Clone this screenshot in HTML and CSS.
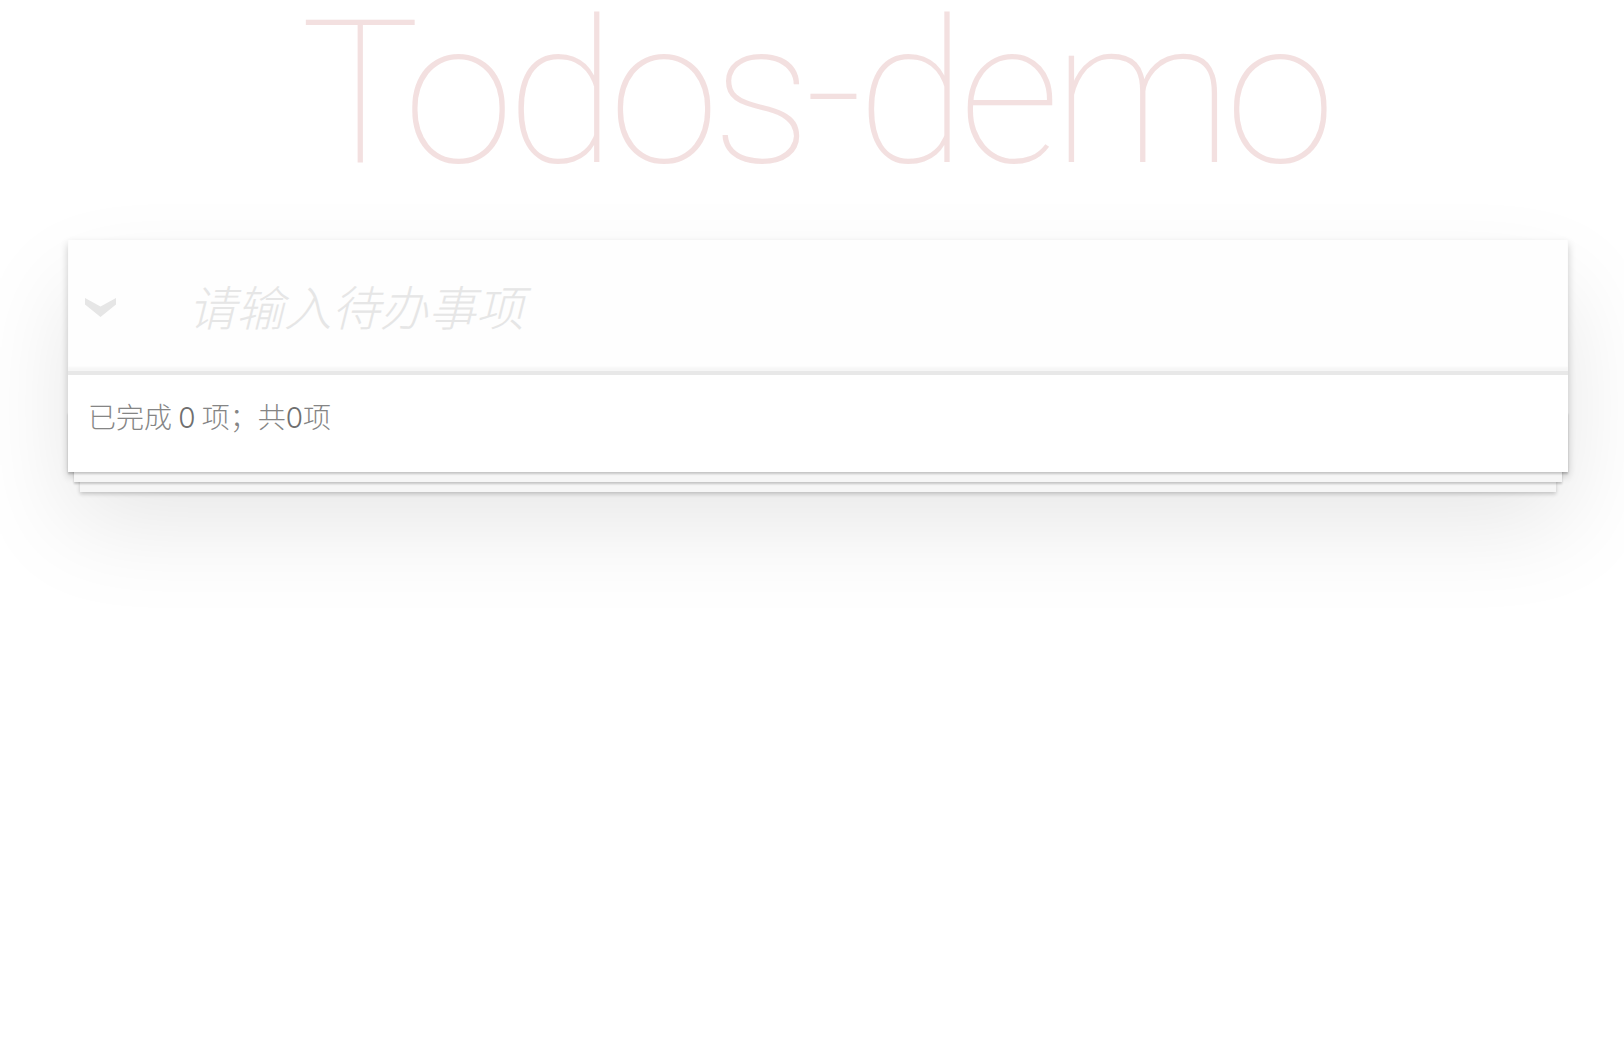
FILE: index.html
```html
<!DOCTYPE html>
<html lang="zh-CN">
<head>
<meta charset="utf-8">
<title>Todos-demo</title>
<link rel="stylesheet" href="styles.css">
</head>
<body>
<div class="page">
  <h1 class="title">Todos-demo</h1>
  <section class="todoapp">
    <header class="new-row">
      <label class="toggle-all" aria-label="全部完成">
        <svg class="chevron" width="31" height="19" viewBox="0 0 31 19"><polygon points="0,0 15.5,8.5 31,0 31,6.5 15.5,19 0,6.5" fill="#e6e6e6"/></svg>
      </label>
      <input class="new-todo" type="text" placeholder="请输入待办事项">
    </header>
    <footer class="footer">
      <span class="todo-count">已完成 <strong class="num">0</strong> 项；共<strong class="num">0</strong>项</span>
    </footer>
  </section>
</div>
</body>
</html>
```
FILE: styles.css
```css
html, body {
  margin: 0;
  padding: 0;
  background: #ffffff;
  min-height: 100%;
}

html {
  height: 100%;
}

body {
  font-family: "Inter", "Helvetica Neue", "Liberation Sans", "Noto Sans CJK SC", sans-serif;
  color: #4d4d4d;
}

.page {
  display: flex;
  flex-direction: column;
  padding-left: 68px;
  min-height: 100vh;
  box-sizing: border-box;
}

.title {
  width: 1500px;
  margin: 0;
  height: 188px;
  font-size: 200px;
  line-height: 188px;
  font-weight: 100;
  letter-spacing: -7px;
  text-indent: -7px;
  text-align: center;
  color: rgba(175, 47, 47, 0.15);
  font-family: "Roboto", "Inter", "Liberation Sans", sans-serif;
  white-space: nowrap;
}

.todoapp {
  width: 1500px;
  margin-top: 52px;
  background: #fff;
  box-shadow: 0 4px 8px 0 rgba(0, 0, 0, 0.2), 0 50px 100px 0 rgba(0, 0, 0, 0.1);
  display: flex;
  flex-direction: column;
}

.new-row {
  display: flex;
  align-items: stretch;
  height: 131px;
  background: rgba(0, 0, 0, 0.003);
  box-shadow: inset 0 -4px 2px rgba(0, 0, 0, 0.03);
}

.toggle-all {
  flex: none;
  width: 120px;
  display: flex;
  align-items: center;
  padding-left: 17px;
  padding-top: 4px;
  box-sizing: border-box;
}

.chevron {
  display: block;
}

.new-todo {
  flex: 1;
  border: none;
  outline: none;
  background: transparent;
  padding: 0 32px 0 0;
  margin: 0;
  font-size: 48px;
  line-height: 67px;
  font-family: "Noto Sans CJK SC", sans-serif;
  font-weight: 300;
  color: #4d4d4d;
}

.new-todo::placeholder {
  font-style: italic;
  font-weight: 300;
  color: #e6e6e6;
}

.footer {
  position: relative;
  border-top: 4px solid #e8e8e8;
  display: flex;
  align-items: center;
  padding: 0 20px 16px 20px;
  box-sizing: border-box;
  height: 101px;
  color: #858585;
  font-size: 28px;
}

.footer::before {
  content: "";
  position: absolute;
  left: 0;
  right: 0;
  bottom: 0;
  height: 60px;
  box-shadow: 0 2px 2px rgba(0, 0, 0, 0.2),
              0 16px 0 -6px #f6f6f6,
              0 18px 2px -6px rgba(0, 0, 0, 0.2),
              0 32px 0 -12px #f6f6f6,
              0 34px 4px -12px rgba(0, 0, 0, 0.2);
}

.todo-count {
  position: relative;
  z-index: 1;
  font-family: "Noto Sans CJK SC", sans-serif;
  font-weight: 300;
  white-space: pre;
}

.num {
  font-family: "Inter", "Liberation Sans", sans-serif;
  font-weight: 300;
  color: #6f6f6f;
}
```
